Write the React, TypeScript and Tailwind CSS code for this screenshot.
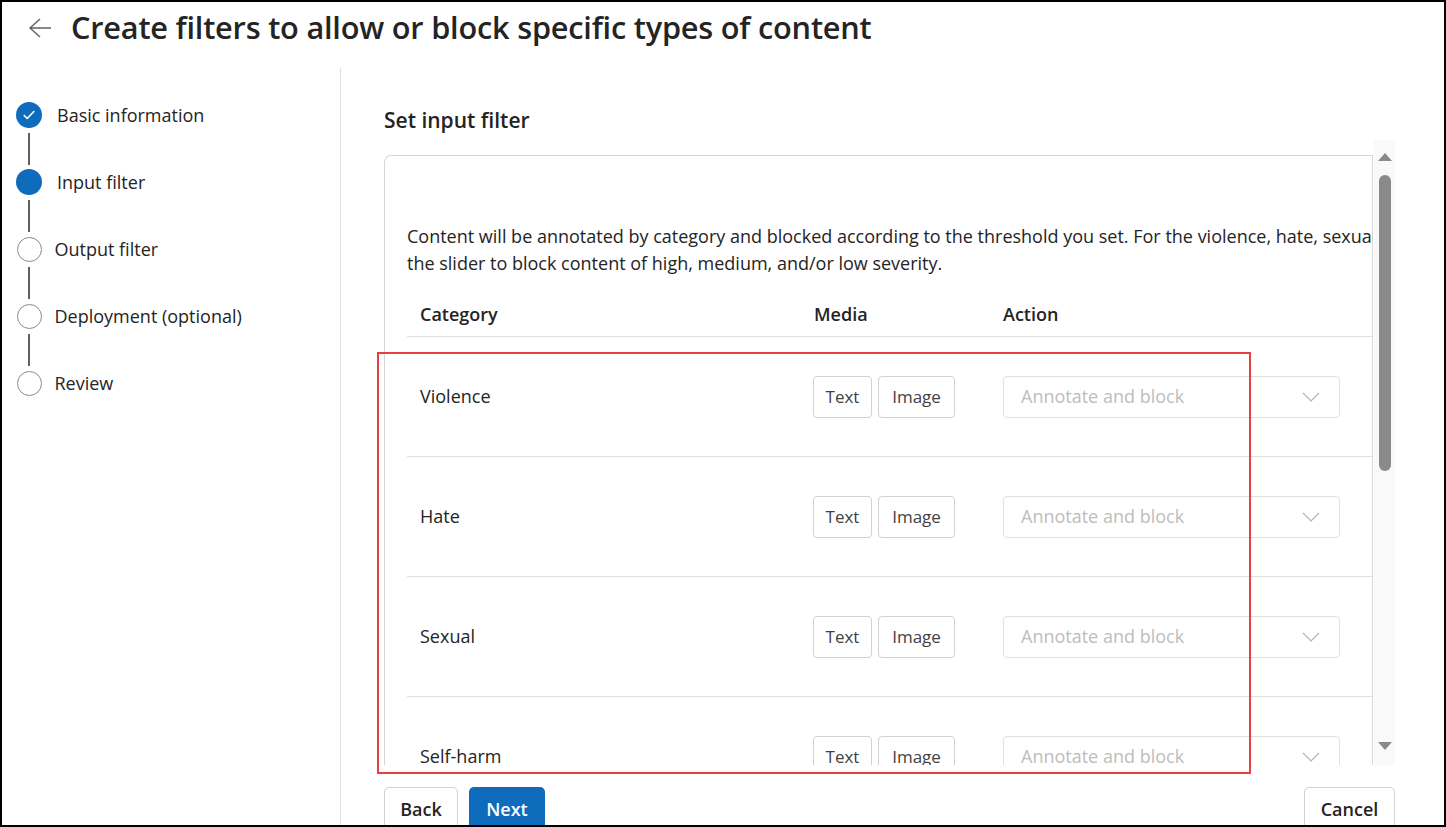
const steps = [
  { label: "Basic information", state: "done" },
  { label: "Input filter", state: "current" },
  { label: "Output filter", state: "todo" },
  { label: "Deployment (optional)", state: "todo" },
  { label: "Review", state: "todo" },
];

const categories = ["Violence", "Hate", "Sexual", "Self-harm"];

function StepDot({ state }: { state: string }) {
  if (state === "done") {
    return (
      <div className="w-[26px] h-[26px] rounded-full bg-[#0f6cbd] flex items-center justify-center shrink-0">
        <svg width="14" height="14" viewBox="0 0 16 16" fill="none">
          <path d="M2.5 8.5l3.5 3.5 7.5-8" stroke="white" strokeWidth="1.8" strokeLinecap="round" strokeLinejoin="round" />
        </svg>
      </div>
    );
  }
  if (state === "current") {
    return <div className="w-[26px] h-[26px] rounded-full bg-[#0f6cbd] shrink-0" />;
  }
  return <div className="w-[25px] h-[25px] rounded-full border border-[#8a8a8a] bg-white shrink-0 ml-[0.5px]" />;
}

function Chevron() {
  return (
    <svg width="18" height="10" viewBox="0 0 18 10" fill="none">
      <path d="M1 1l8 8 8-8" stroke="#b5b5b5" strokeWidth="1.2" />
    </svg>
  );
}

export default function App() {
  return (
    <div className="relative h-[827px] w-full overflow-hidden bg-white border-2 border-black flex flex-col text-[#242424] font-['Open_Sans',sans-serif]">
      {/* header */}
      <header className="h-[66px] shrink-0 flex items-center pl-[25px]">
        <svg width="26" height="22" viewBox="0 0 26 22" fill="none" className="-mt-[14px]">
          <path d="M13 2L3 11l10 9M3 11h21" stroke="#616161" strokeWidth="1.4" />
        </svg>
        <h1 className="ml-[18px] -mt-[16px] text-[30.7px] leading-[40px] font-semibold tracking-[-0.2px] whitespace-nowrap">
          Create filters to allow or block specific types of content
        </h1>
      </header>

      <div className="flex flex-1 min-h-0">
        {/* stepper */}
        <aside className="w-[339px] shrink-0 border-r border-[#e0e0e0] pt-[34px] pl-[14px]">
          {steps.map((s, i) => (
            <div key={s.label}>
              <div className="flex items-center h-[26px]">
                <StepDot state={s.state} />
                <span className={`text-[18px] whitespace-nowrap ${s.state === "todo" ? "ml-[13px]" : "ml-[15px]"}`}>
                  {s.label}
                </span>
              </div>
              {i < steps.length - 1 && (
                <div className="h-[41px] flex items-center">
                  <div className="ml-[12px] w-[2px] h-[32px] bg-[#616161]" />
                </div>
              )}
            </div>
          ))}
        </aside>

        {/* main */}
        <main className="flex-1 min-w-0 flex flex-col pl-[43px] pr-[49px]">
          <h2 className="mt-[38px] text-[21px] leading-[28px] font-semibold">Set input filter</h2>

          <div className="mt-[6px] h-[625px] flex">
            <div className="flex-1 min-w-0 pt-[15px]">
              <div className="h-full border-l border-t border-r border-[#d6d6d6] rounded-tl-[7px] overflow-hidden pl-[22px]">
                <div className="pt-[67px] text-[18px] leading-[27px] whitespace-nowrap">
                  <p>Content will be annotated by category and blocked according to the threshold you set. For the violence, hate, sexual, and self-harm categories, adjust</p>
                  <p>the slider to block content of high, medium, and/or low severity.</p>
                </div>

                <div className="w-[1200px] mt-[16px]">
                  <div className="flex h-[44px] items-center border-b border-[#e0e0e0] text-[18px] font-semibold">
                    <div className="w-[394px] pl-[13px]">Category</div>
                    <div className="w-[189px] pl-[13px]">Media</div>
                    <div className="pl-[13px]">Action</div>
                  </div>
                  {categories.map((c) => (
                    <div key={c} className="flex h-[120px] items-center border-b border-[#e0e0e0] text-[18px]">
                      <div className="w-[394px] pl-[13px]">{c}</div>
                      <div className="w-[189px] pl-[12px] flex gap-[6px]">
                        <button className="h-[42px] w-[59px] rounded-[4px] border border-[#d1d1d1] text-[17px] text-[#424242]">Text</button>
                        <button className="h-[42px] w-[77px] rounded-[4px] border border-[#d1d1d1] text-[17px] text-[#424242]">Image</button>
                      </div>
                      <div className="pl-[13px]">
                        <div className="w-[337px] h-[42px] rounded-[4px] border border-[#e0e0e0] flex items-center justify-between pl-[17px] pr-[19px]">
                          <span className="text-[18px] text-[#bdbdbd]">Annotate and block</span>
                          <Chevron />
                        </div>
                      </div>
                    </div>
                  ))}
                </div>
              </div>
            </div>

            {/* scrollbar */}
            <div className="w-[21px] ml-[1px] bg-[#f9f9f9] flex flex-col items-center">
              <div className="mt-[13px] w-0 h-0 border-l-[7px] border-r-[7px] border-b-[8px] border-l-transparent border-r-transparent border-b-[#8a8a8a]" />
              <div className="mt-[14px] w-[12px] h-[296px] rounded-full bg-[#8a8a8a]" />
              <div className="mt-auto mb-[15px] w-0 h-0 border-l-[7px] border-r-[7px] border-t-[8px] border-l-transparent border-r-transparent border-t-[#8a8a8a]" />
            </div>
          </div>

          {/* footer buttons */}
          <div className="mt-[22px] flex items-start justify-between">
            <div className="flex gap-[11px]">
              <button className="h-[44px] w-[74px] rounded-[5px] border border-[#d1d1d1] text-[18px] font-semibold">Back</button>
              <button className="h-[44px] w-[76px] rounded-[5px] bg-[#0f6cbd] text-white text-[18px] font-semibold">Next</button>
            </div>
            <button className="h-[44px] w-[91px] rounded-[5px] border border-[#d1d1d1] text-[18px] font-semibold">Cancel</button>
          </div>
        </main>
      </div>

      {/* highlight annotation */}
      <div className="absolute left-[375px] top-[350px] w-[874px] h-[422px] border-2 border-[#e8403f] pointer-events-none" />
    </div>
  );
}
